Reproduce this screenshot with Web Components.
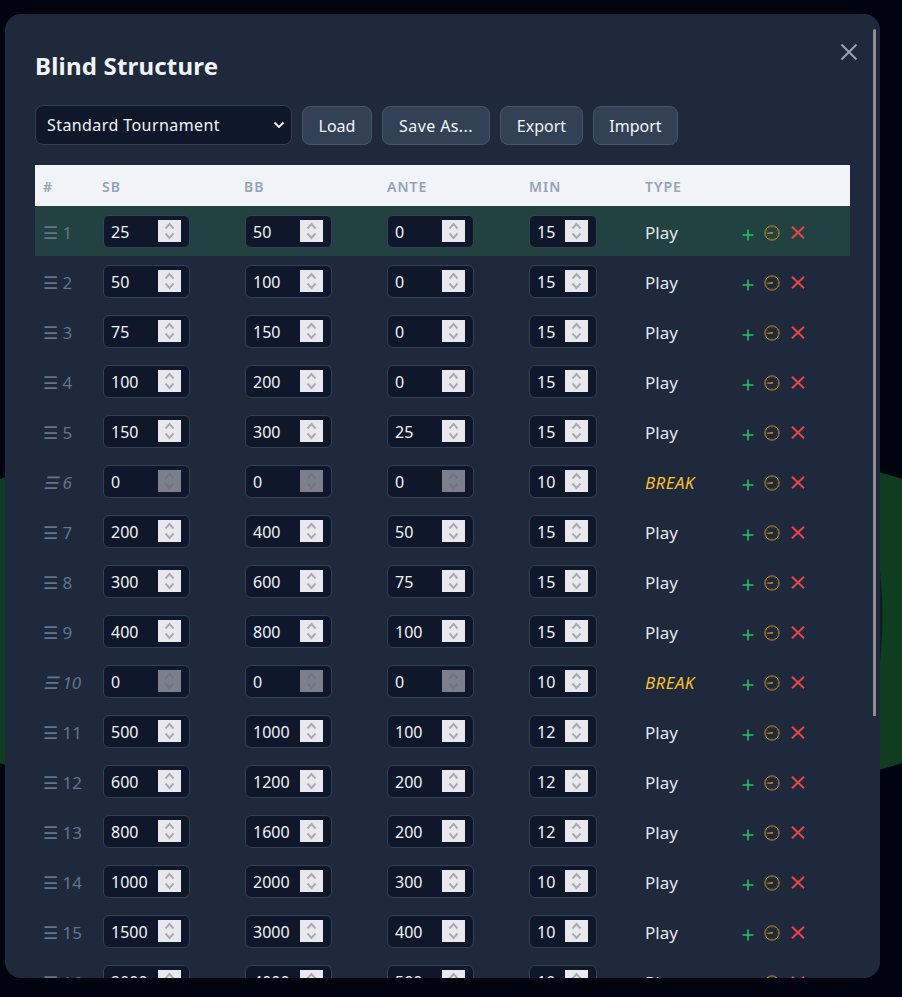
<!DOCTYPE html>
<html>
<head>
<meta charset="utf-8">
<title>Blind Structure</title>
<style>
    html, body {
        margin: 0;
        height: 997px;
        overflow: hidden;
        background: #01040f;
        font-family: "Noto Sans", "Open Sans", sans-serif;
    }
</style>
</head>
<body>
<table-backdrop></table-backdrop>
<blind-modal heading="Blind Structure">
    <blind-toolbar>
        <preset-select value="Standard Tournament"></preset-select>
        <tool-button style="width: 70px">Load</tool-button>
        <tool-button style="width: 108px; letter-spacing: .4px">Save As...</tool-button>
        <tool-button style="width: 83px">Export</tool-button>
        <tool-button style="width: 85px">Import</tool-button>
    </blind-toolbar>
    <blind-table id="levels"></blind-table>
</blind-modal>

<script>
const COLUMNS = '60px 142px 142px 142px 116px 96px 1fr';

const levels = [
    [25, 50, 0, 15], [50, 100, 0, 15], [75, 150, 0, 15], [100, 200, 0, 15],
    [150, 300, 25, 15], [0, 0, 0, 10, 'break'], [200, 400, 50, 15], [300, 600, 75, 15],
    [400, 800, 100, 15], [0, 0, 0, 10, 'break'], [500, 1000, 100, 12], [600, 1200, 200, 12],
    [800, 1600, 200, 12], [1000, 2000, 300, 10], [1500, 3000, 400, 10], [2000, 4000, 500, 10],
];

// Green poker table sits behind the modal
class TableBackdrop extends HTMLElement {
    constructor() {
        super();
        this.attachShadow({mode: 'open'}).innerHTML = `
            <style>
                :host { display: block; position: absolute; inset: 0; }
                svg { display: block; }
            </style>
            <svg width="902" height="997" viewBox="0 0 902 997">
                <ellipse cx="451" cy="621" rx="642" ry="200" fill="#0f3d20"/>
                <ellipse cx="661.5" cy="617" rx="221" ry="300" fill="#0e1e20"/>
            </svg>`;
    }
}

class BlindModal extends HTMLElement {
    constructor() {
        super();
        this.attachShadow({mode: 'open'}).innerHTML = `
            <style>
                :host {
                    display: block;
                    position: relative;
                    box-sizing: border-box;
                    width: 875px;
                    height: 964px;
                    margin: 14px 0 0 5px;
                    padding: 33px 30px 0;
                    border-radius: 16px;
                    background: #1e293b;
                    overflow: hidden;
                }
                h2 {
                    margin: 0 0 20px;
                    color: #f1f5f9;
                    font-size: 24px;
                    line-height: 38px;
                    font-weight: 700;
                    letter-spacing: .2px;
                }
                .close {
                    position: absolute;
                    top: 30px;
                    left: 835px;
                    width: 18px;
                    height: 16px;
                }
                .thumb {
                    position: absolute;
                    top: 15px;
                    left: 868px;
                    width: 3px;
                    height: 687px;
                    background: #8b8d93;
                    border-radius: 2px 2px 0 0;
                }
            </style>
            <h2></h2>
            <svg class="close" viewBox="0 0 18 16" fill="none" stroke="#94a3b8" stroke-width="2">
                <path d="M1.5 .5 L16.5 15.5 M16.5 .5 L1.5 15.5"/>
            </svg>
            <slot></slot>
            <div class="thumb"></div>`;
        this.shadowRoot.querySelector('h2').textContent = this.getAttribute('heading');
    }
}

class BlindToolbar extends HTMLElement {
    constructor() {
        super();
        this.attachShadow({mode: 'open'}).innerHTML = `
            <style>
                :host {
                    display: flex;
                    align-items: flex-end;
                    gap: 10px;
                    height: 40px;
                    margin-bottom: 20px;
                }
            </style>
            <slot></slot>`;
    }
}

class PresetSelect extends HTMLElement {
    constructor() {
        super();
        this.attachShadow({mode: 'open'}).innerHTML = `
            <style>
                :host {
                    display: flex;
                    align-items: center;
                    justify-content: space-between;
                    box-sizing: border-box;
                    width: 257px;
                    height: 40px;
                    padding: 0 6px 0 11px;
                    border: 1px solid #334155;
                    border-radius: 8px;
                    background: #0f172a;
                    color: #f1f5f9;
                    font-size: 16px;
                    letter-spacing: .42px;
                }
                svg { display: block; }
            </style>
            <span></span>
            <svg width="12" height="8" viewBox="0 0 12 8" fill="none" stroke="#f1f5f9" stroke-width="1.8">
                <path d="M1.5 1.5 L6 6 L10.5 1.5"/>
            </svg>`;
        this.shadowRoot.querySelector('span').textContent = this.getAttribute('value');
    }
}

class ToolButton extends HTMLElement {
    constructor() {
        super();
        this.attachShadow({mode: 'open'}).innerHTML = `
            <style>
                :host {
                    display: flex;
                    align-items: center;
                    justify-content: center;
                    box-sizing: border-box;
                    height: 39px;
                    border: 1px solid #475569;
                    border-radius: 8px;
                    background: #334155;
                    color: #f1f5f9;
                    font-size: 16px;
                }
            </style>
            <slot></slot>`;
    }
}

class BlindTable extends HTMLElement {
    constructor() {
        super();
        this.attachShadow({mode: 'open'}).innerHTML = `
            <style>
                :host { display: block; }
                .head {
                    display: grid;
                    grid-template-columns: ${COLUMNS};
                    align-items: center;
                    height: 41px;
                    background: #f1f5f9;
                    color: #94a3b8;
                    font-size: 14px;
                    font-weight: 600;
                    letter-spacing: 1px;
                }
                .head span { padding: 2px 0 0 8px; }
                .head span:nth-child(2), .head span:nth-child(3) { padding-left: 7px; }
            </style>
            <div class="head">
                <span>#</span><span>SB</span><span>BB</span><span>ANTE</span><span>MIN</span><span>TYPE</span><span></span>
            </div>
            <slot></slot>`;
    }

    connectedCallback() {
        levels.forEach((level, i) => {
            const row = document.createElement('level-row');
            row.setAttribute('index', i + 1);
            row.setAttribute('values', level.slice(0, 4).join(','));
            if (level[4]) row.setAttribute('break', '');
            if (i === 0) row.setAttribute('current', '');
            this.appendChild(row);
        });
    }
}

class NumField extends HTMLElement {
    constructor() {
        super();
        this.attachShadow({mode: 'open'}).innerHTML = `
            <style>
                :host {
                    display: flex;
                    align-items: center;
                    justify-content: space-between;
                    box-sizing: border-box;
                    width: 87px;
                    height: 33px;
                    padding: 0 8px 0 7px;
                    border: 1px solid #334155;
                    border-radius: 6px;
                    background: #0f172a;
                    color: #f1f5f9;
                    font-size: 16px;
                }
                :host([short]) { width: 68px; }
                span { padding-top: 2px; }
                .spin {
                    display: block;
                    flex: none;
                    width: 23px;
                    height: 22px;
                    background: #e9e9ed;
                    stroke: #a9a9b2;
                }
                :host([disabled]) .spin { opacity: .5; stroke: #d0d0d6; }
            </style>
            <span></span>
            <svg class="spin" viewBox="0 0 23 22" fill="none" stroke-width="1.9">
                <path d="M7.5 8.5 L11.5 4 L15.5 8.5 M7.5 13.5 L11.5 18 L15.5 13.5"/>
            </svg>`;
        this.shadowRoot.querySelector('span').textContent = this.getAttribute('value');
    }
}

class RowActions extends HTMLElement {
    constructor() {
        super();
        // tick marks round the timer dial
        let ticks = '';
        for (let a = 0; a < 360; a += 30) {
            ticks += `<path d="M8 1 V2.4" transform="rotate(${a} 8 8)"/>`;
        }
        this.attachShadow({mode: 'open'}).innerHTML = `
            <style>
                :host { display: block; position: relative; height: 20px; }
                svg { position: absolute; display: block; fill: none; }
                .add { left: 9px; top: 8px; }
                .timer { left: 31px; top: 4px; }
                .del { left: 58px; top: 5px; }
            </style>
            <svg class="add" width="12" height="12" viewBox="0 0 12 12" stroke="#22c55e" stroke-width="1.6">
                <path d="M6 .5 V11.5 M.5 6 H11.5"/>
            </svg>
            <svg class="timer" width="16" height="16" viewBox="0 0 16 16" stroke="#c48a1e" stroke-width=".9">
                <circle cx="8" cy="8" r="7.2"/>
                <g stroke-width=".7">${ticks}</g>
                <path d="M3 8.2 L8.6 7.2 V8.4 Z" fill="#f59e0b" stroke="#f59e0b" stroke-width=".4"/>
            </svg>
            <svg class="del" width="14" height="13" viewBox="0 0 14 13" stroke="#ef4444" stroke-width="1.9">
                <path d="M1 .7 L13 12.3 M13 .7 L1 12.3"/>
            </svg>`;
    }
}

class LevelRow extends HTMLElement {
    constructor() {
        super();
        this.attachShadow({mode: 'open'});
    }

    connectedCallback() {
        const isBreak = this.hasAttribute('break');
        const [sb, bb, ante, min] = this.getAttribute('values').split(',');
        const field = (v, lock, short) => `<div class="cell"><num-field value="${v}" ${lock ? 'disabled' : ''} ${short ? 'short' : ''}></num-field></div>`;
        this.shadowRoot.innerHTML = `
            <style>
                :host {
                    display: grid;
                    grid-template-columns: ${COLUMNS};
                    align-items: center;
                    height: 50px;
                    font-size: 17px;
                }
                :host([current]) { background: #214240; }
                .num {
                    padding: 3px 0 0 8px;
                    color: #64748b;
                    white-space: pre;
                }
                .cell { padding-left: 8px; }
                .type { padding: 2px 0 0 8px; color: #e2e8f0; }
                :host([break]) .num { font-style: italic; }
                :host([break]) .type { color: #fbbf24; font-style: italic; letter-spacing: .4px; }
            </style>
            <div class="num">☰ ${this.getAttribute('index')}</div>
            ${field(sb, isBreak)}${field(bb, isBreak)}${field(ante, isBreak)}${field(min, false, true)}
            <div class="type">${isBreak ? 'BREAK' : 'Play'}</div>
            <row-actions></row-actions>`;
    }
}

customElements.define('table-backdrop', TableBackdrop);
customElements.define('blind-modal', BlindModal);
customElements.define('blind-toolbar', BlindToolbar);
customElements.define('preset-select', PresetSelect);
customElements.define('tool-button', ToolButton);
customElements.define('num-field', NumField);
customElements.define('row-actions', RowActions);
customElements.define('level-row', LevelRow);
customElements.define('blind-table', BlindTable);
</script>
</body>
</html>
